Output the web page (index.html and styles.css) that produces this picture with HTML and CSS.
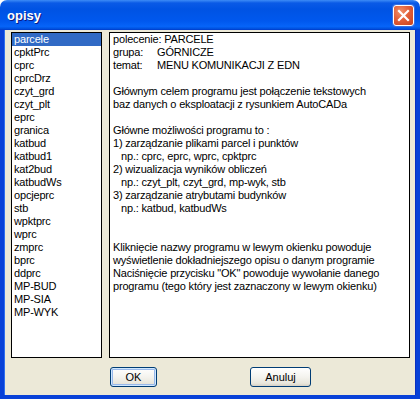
FILE: index.html
```html
<!DOCTYPE html>
<html>
<head>
  <title>opisy</title>
  <link rel="stylesheet" href="styles.css">
</head>
<body>
  <div class="window">
    <div class="titlebar">
      <span class="title">opisy</span>
      <button class="close" title="Zamknij">
        <svg width="13" height="13" viewBox="0 0 13 13">
          <path d="M2 2 L11 11 M11 2 L2 11" stroke="#fff" stroke-width="2.2" stroke-linecap="square" fill="none"/>
        </svg>
      </button>
    </div>
    <div class="frame">
      <div class="panes">
        <ul class="list">
          <li class="selected">parcele</li>
          <li>cpktPrc</li>
          <li>cprc</li>
          <li>cprcDrz</li>
          <li>czyt_grd</li>
          <li>czyt_plt</li>
          <li>eprc</li>
          <li>granica</li>
          <li>katbud</li>
          <li>katbud1</li>
          <li>kat2bud</li>
          <li>katbudWs</li>
          <li>opcjeprc</li>
          <li>stb</li>
          <li>wpktprc</li>
          <li>wprc</li>
          <li>zmprc</li>
          <li>bprc</li>
          <li>ddprc</li>
          <li>MP-BUD</li>
          <li>MP-SIA</li>
          <li>MP-WYK</li>
        </ul>
        <div class="desc">
          <div class="para">
            <div>polecenie: PARCELE</div>
            <div><span class="label">grupa:</span>GÓRNICZE</div>
            <div><span class="label">temat:</span>MENU KOMUNIKACJI Z EDN</div>
          </div>
          <div class="para">
            <div>Głównym celem programu jest połączenie tekstowych</div>
            <div>baz danych o eksploatacji z rysunkiem AutoCADa</div>
          </div>
          <div class="para para-big">
            <div>Główne możliwości programu to :</div>
            <div>1) zarządzanie plikami parcel i punktów</div>
            <div class="indent">np.: cprc, eprc, wprc, cpktprc</div>
            <div>2) wizualizacja wyników obliczeń</div>
            <div class="indent">np.: czyt_plt, czyt_grd, mp-wyk, stb</div>
            <div>3) zarządzanie atrybutami budynków</div>
            <div class="indent">np.: katbud, katbudWs</div>
          </div>
          <div class="para">
            <div>Kliknięcie nazwy programu w lewym okienku powoduje</div>
            <div>wyświetlenie dokładniejszego opisu o danym programie</div>
            <div>Naciśnięcie przycisku "OK" powoduje wywołanie danego</div>
            <div>programu (tego który jest zaznaczony w lewym okienku)</div>
          </div>
        </div>
      </div>
      <div class="buttons">
        <button class="btn btn-default">OK</button>
        <button class="btn btn-cancel">Anuluj</button>
      </div>
    </div>
  </div>
</body>
</html>
```

FILE: styles.css
```css
body {
  margin: 0;
  background: #ffffff;
  font-family: "Liberation Sans", Arial, sans-serif;
  font-size: 11px;
  letter-spacing: -0.18px;
}

.window {
  width: 420px;
  height: 399px;
  display: flex;
  flex-direction: column;
}

.titlebar {
  height: 30px;
  flex: none;
  display: flex;
  align-items: center;
  justify-content: space-between;
  padding: 0 6px 0 7px;
  box-sizing: border-box;
  border-radius: 7px 7px 0 0;
  background: linear-gradient(#3d8cf6 0, #0a5ae6 10%, #0053e3 30%, #0058ee 70%, #0664f8 88%, #0050dd 96%, #0038c8 100%);
}

.title {
  color: #fff;
  font-weight: bold;
  font-size: 13px;
  letter-spacing: 0;
  text-shadow: 1px 1px #0a1a83;
  margin-top: 1px;
}

.close {
  width: 21px;
  height: 21px;
  padding: 0;
  margin-top: 1px;
  border: 1px solid #fff;
  border-radius: 3px;
  display: flex;
  align-items: center;
  justify-content: center;
  background: radial-gradient(circle at 35% 30%, #f0916a 0, #e2603a 45%, #c8421c 100%);
  box-shadow: 0 0 0 1px #3a6fe0;
}

.frame {
  flex: 1;
  display: flex;
  flex-direction: column;
  background: #ece9d8;
  border: 4px solid #0841d8;
  border-top: none;
  box-shadow: inset 1px 0 #2f6ff0, inset -1px 0 #0a2fc0;
  padding: 2px 6px 8px 7px;
}

.panes {
  display: flex;
  gap: 7px;
  height: 326px;
}

.list {
  list-style: none;
  margin: 0;
  padding: 0;
  width: 89px;
  background: #fff;
  border: 1px solid #000;
  line-height: 13px;
}

.list li {
  padding-left: 2px;
  height: 13px;
  white-space: nowrap;
}

.list .selected {
  background: #316ac5;
  color: #fff;
}

.desc {
  width: 296px;
  background: #fff;
  border: 1px solid #000;
  padding: 0 0 0 3px;
  line-height: 13px;
  white-space: nowrap;
}

.para {
  margin-bottom: 13px;
}

.para-big {
  margin-bottom: 26px;
}

.label {
  display: inline-block;
  width: 44px;
}

.indent {
  padding-left: 8px;
}

.buttons {
  display: flex;
  gap: 93px;
  padding-left: 99px;
  margin-top: 9px;
}

.btn {
  height: 20px;
  font-family: "Liberation Sans", Arial, sans-serif;
  font-size: 11px;
  color: #000;
  padding: 0;
  border: 1px solid #003c74;
  border-radius: 3px;
  background: linear-gradient(#ffffff 0, #f4f3ee 50%, #e8e6dc 85%, #d6d0c5 100%);
}

.btn-default {
  width: 47px;
  box-shadow: inset 0 0 0 1px #cee7ff, inset 0 0 0 2px #98b8ea;
}

.btn-cancel {
  width: 61px;
}
```
